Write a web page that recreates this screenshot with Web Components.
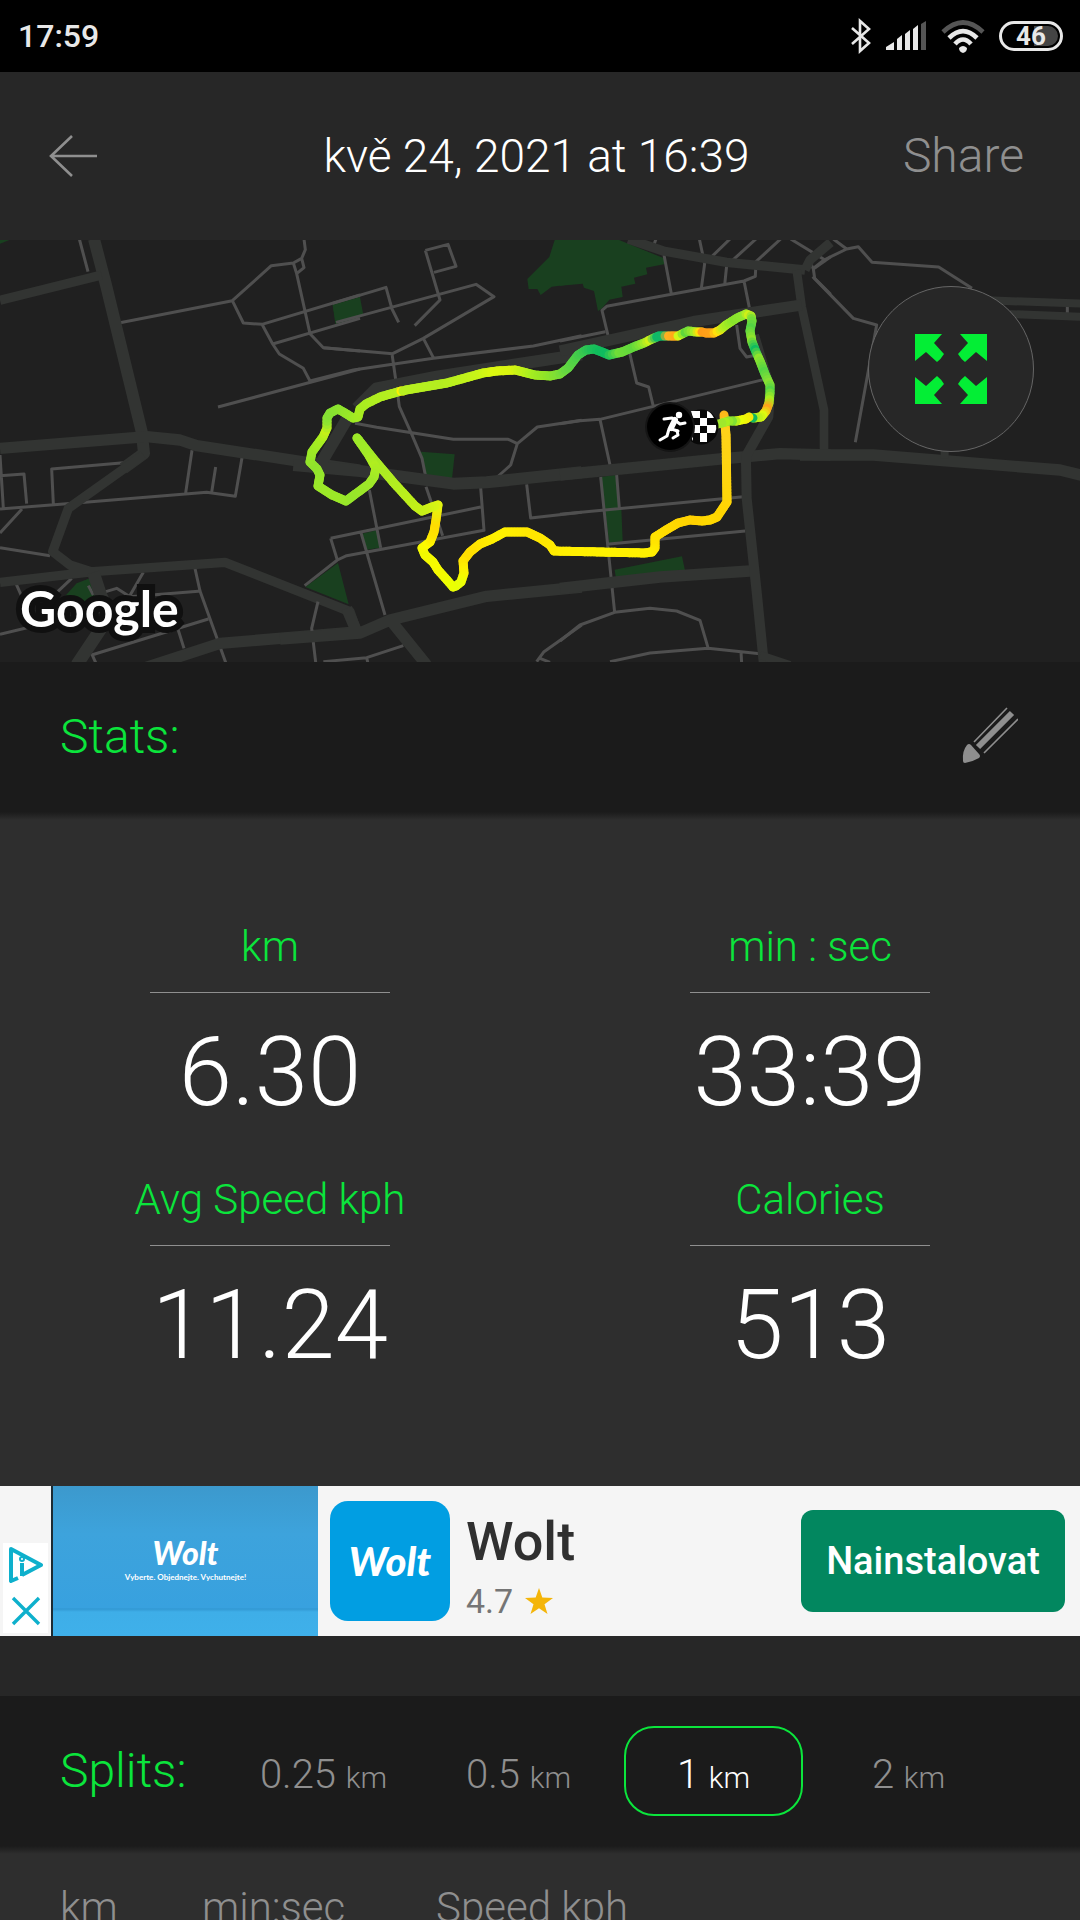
<!DOCTYPE html>
<html lang="cs">
<head>
<meta charset="utf-8">
<meta name="viewport" content="width=device-width, initial-scale=1">
<title>Run summary</title>
<style>
:root {
  --green: #0be53c;
  --muted: #8f8f8f;
  --dark: #1b1b1b;
  --panel: #2e2e2e;
  --bar: #272727;
}
body { margin: 0; background: var(--panel); color: #fff; font-family: Roboto, "Liberation Sans", sans-serif; font-weight: 300; }
</style>
</head>
<body>
<run-app></run-app>
<script>
const define = (name, html, setup) => {
  const template = document.createElement('template');
  template.innerHTML = '<style>:host{display:block;box-sizing:border-box}*{box-sizing:border-box}button{font:inherit;color:inherit;background:none;border:0;padding:0;margin:0}svg{display:block}</style>' + html;
  customElements.define(name, class extends HTMLElement {
    constructor() {
      super();
      this.attachShadow({ mode: 'open' }).append(template.content.cloneNode(true));
    }
    connectedCallback() { if (setup) setup(this, this.shadowRoot); }
  });
};

define('status-bar', `
<style>
:host { height: 72px; background: #000; color: #e8e8e8; font-weight: 500; display: flex; align-items: center; justify-content: space-between; padding: 0 17px 0 18px; }
time { font-size: 32px; line-height: 40px; }
.icons { display: flex; align-items: center; gap: 14px; }
.battery { width: 64px; height: 30px; border: 3px solid #e8e8e8; border-radius: 15px; padding: 2px; }
.battery span { display: block; height: 20px; border-radius: 10px; font-size: 26px; line-height: 20px; font-weight: 700; text-align: center; background: linear-gradient(90deg, #000 55%, #444 55%); }
</style>
<time>17:59</time>
<div class="icons">
  <svg width="22" height="36" viewBox="0 0 22 36" fill="none" stroke="#e8e8e8" stroke-width="2.6"><path d="M2 10 19 25 10 33V3L19 11 2 26"/></svg>
  <svg width="41" height="30" viewBox="0 0 41 30" fill="#e8e8e8"><path d="M0 29v-3l8-5v8zM11 29V18l5-4v15zM19 29V13l5-4v20zM27 29V8l5-4v25z"/><path fill="#555" d="M35 29V3l5-3v29z"/></svg>
  <svg width="44" height="34" viewBox="0 0 44 34" fill="none" stroke="#e8e8e8" stroke-width="4.6"><path stroke="#555" d="M2 13Q22-6 42 13"/><path d="M8 19Q22 5 36 19M14 25Q22 16 30 25"/><path fill="#e8e8e8" stroke="none" d="M18 29q4-4 8 0 0 4-4 5-4-1-4-5z"/></svg>
  <div class="battery"><span>46</span></div>
</div>`);

define('page-header', `
<style>
:host { height: 168px; background: var(--bar); display: grid; grid-template-columns: 1fr auto 1fr; align-items: center; padding: 0 56px 0 49px; }
h1 { margin: 0; font-size: 46px; line-height: 64px; font-weight: 300; }
button { justify-self: start; color: var(--muted); }
.share { justify-self: end; font-size: 48px; line-height: 64px; }
</style>
<button aria-label="Back"><svg width="48" height="42" viewBox="0 0 48 42" fill="none" stroke="#8f8f8f" stroke-width="2.6"><path d="M48 21H3M23 1 2 21 23 41"/></svg></button>
<h1><slot></slot></h1>
<button class="share">Share</button>`);

/* Recorded track: x, y and the pace colour at that point */
const track = [
[724,415,'ffb21a'],[726,435,'ffd21a'],[727,502,'ffd60a'],[717,517,'ffd400'],[710,520,'ffd600'],[702,521,'ffd900'],[690,520,'ffd000'],[678,523,'ffd400'],[666,530,'ffd900'],[655,537,'ffe000'],[655,548,'ffe400'],[652,552,'ffea00'],[644,553,'fff000'],[600,552,'fff200'],[554,551,'ffee00'],[550,545,'ffea00'],[540,538,'ffe800'],[527,532,'ffe600'],[505,532,'ffee00'],[492,539,'fff200'],[480,544,'ffea00'],[470,552,'ffe000'],[463,561,'ffde00'],[464,573,'fff000'],[461,582,'f4fb00'],[456,586,'e8ff08'],[453,587,'e8ff08'],[447,580,'ecff00'],[438,570,'f4fa00'],[433,562,'f8fa00'],[425,555,'f4fa00'],[422,548,'f0fa00'],[430,542,'fffa00'],[434,532,'ffe400'],[436,520,'ffdc00'],[438,505,'e8f010'],[432,507,'d8f514'],[422,511,'ccf018'],[415,506,'c4f018'],[393,482,'b4ee20'],[372,457,'a8ea24'],[357,438,'9ce828'],[368,454,'a0ea28'],[376,468,'b0ee20'],[374,477,'a8ec24'],[369,484,'a0e828'],[346,501,'96e62a'],[332,495,'9ce828'],[318,486,'9ce828'],[320,475,'98e82a'],[317,469,'94e62c'],[310,462,'90e42c'],[312,452,'98e828'],[323,437,'a8ee20'],[327,428,'c4f018'],[327,418,'90e430'],[330,413,'84e034'],[338,409,'88e230'],[345,413,'90e42c'],[353,418,'98e828'],[358,417,'a0ea24'],[360,409,'a8ec20'],[366,404,'a8ec20'],[380,397,'b0ee20'],[401,391,'b8ee20'],[403,391,'fff000'],[406,390,'b8f020'],[447,383,'b4ee20'],[483,373,'c8f418'],[497,371,'dcf810'],[515,370,'d8f410'],[535,375,'a8ee20'],[550,376,'90e428'],[560,374,'80e034'],[568,368,'68d840'],[578,355,'4cd048'],[586,350,'38c850'],[594,349,'20c058'],[602,352,'10bc5c'],[609,355,'10bc60'],[622,352,'70dc38'],[636,346,'60d83c'],[644,343,'88e430'],[652,339,'d0f018'],[659,336,'10b868'],[665,336,'10b868'],[672,336,'ffb020'],[678,336,'ffaa18'],[682,334,'d0f818'],[688,331,'60d83c'],[697,332,'a8ec28'],[702,332,'ffe008'],[706,333,'ff9c18'],[714,333,'ffa218'],[720,330,'ffe00c'],[726,325,'b0ee20'],[737,318,'88e42c'],[746,314,'90e830'],[751,316,'d0f018'],[752,321,'80e034'],[750,331,'54d444'],[752,342,'90e42c'],[756,352,'10bc60'],[760,361,'90e42c'],[765,374,'54d444'],[770,385,'88e034'],[770,393,'54d444'],[769,403,'a8ec20'],[766,411,'ffa21c'],[761,417,'e0f810'],[753,418,'b0ee20'],[749,417,'10b860'],[746,419,'f8e808'],[736,421,'e8ff08'],[729,421,'80e034'],[722,423,'a8f020'],[718,424,'a0e82c']
];

define('route-map', `
<style>
:host { position: relative; overflow: hidden; background: #202020; }
svg.map { width: 100%; height: auto; }
.minor { fill: none; stroke: #4f4f4f; stroke-width: 9; stroke-linejoin: round; }
.major { fill: none; stroke: #323432; stroke-width: 34; stroke-linejoin: round; }
.park { fill: #19401f; }
.track line { stroke-width: 9; stroke-linecap: round; }
.logo { position: absolute; left: 20px; bottom: 22px; font: 700 50px/64px Lato, sans-serif; color: #fff; -webkit-text-stroke: 12px #101010; paint-order: stroke fill; }
button { position: absolute; right: 46px; top: 46px; width: 166px; height: 166px; border-radius: 50%; background: var(--bar); border: 1px solid #666; display: grid; place-items: center; }
</style>
<svg class="map" viewBox="0 240 1080 422" role="img" aria-label="Route map">
  <g transform="translate(0 235) scale(.333333)">
    <path class="park" d="M0 15H28L0 26zM998 210 1080 186V250L1006 266zM1014 984 1046 1108 916 1056zM180 1100 230 1045 270 1030 290 1090 200 1120 130 1150z"/>
    <path class="minor" d="M238 12 264 110M360 263 697 197 814 92 880 84M697 197 730 264 786 268 1080 180M818 327 1080 250M786 268 818 327 838 357 910 400 930 438M912 12 916 44 905 70 880 84 890 116 930 296 970 338 1080 348M905 70 912 98 890 116M654 516 1080 402M0 660 10 820M0 722 72 717 80 806M388 682 155 702 160 806M0 822 200 806 620 772 706 784 726 668M576 646 557 774M647 696 635 772M66 822 0 894M0 938 150 962M215 1030 110 1130M430 1012 385 1090M310 1072 350 1060 390 1085 604 1068M584 996 600 1068 678 1285M48 1046 72 1100M0 1198 240 1140 300 1130M275 1260 625 1152M275 1256 288 1285M530 1170 552 1240M265 1052 280 1080"/>
    <path class="major" style="stroke-width:36" d="M282 12 318 150 425 590 432 655 370 700"/>
    <path class="major" d="M0 196 305 120M430 660 205 820 158 950 210 990 280 1012M0 1042 280 1010 675 982 1050 1130 1075 1200" style="stroke-width:28"/>
    <path class="major" d="M0 640 440 605 540 615 590 632 920 682 1080 705"/>
    <path class="major" d="M280 1012 302 1080 330 1140 230 1290" style="stroke-width:38"/>
    <path class="major" d="M430 1300 660 1225 1080 1190"/>
  </g>
  <g transform="translate(280 235) scale(.333333)">
    <path class="park" d="M825 12H905V144L815 155 782 180 772 162 746 162 742 132 808 66zM158 210 240 187 250 240 168 266zM422 650 524 658 516 732 438 724zM247 896 290 886 300 938 260 944z"/>
    <path class="minor" d="M158 205 318 157 336 222 356 262M168 262 588 148 642 185 430 310 338 356 130 338M436 46 504 28 528 94 462 112M436 46 480 195 404 272M430 310 460 368M90 438 220 405 460 370 760 333 905 302M336 356 348 440 358 515 394 595 426 670 436 720M225 565 290 577 520 613 685 613 712 626 692 690 652 726M712 626 772 576 905 556M268 765 302 938M152 910 602 816M152 910 172 975 200 962 612 886 602 758M438 755 488 902M242 890 315 1140M172 975 74 1052M114 1100 95 1180 108 1290M740 748 752 849 905 832M130 1280 260 1268 370 1232M260 1268 264 1285M770 1280 792 1250 905 1170M780 1270 810 1282"/>
    <path class="major" d="M205 545 140 655 120 690M230 520 290 460 470 425 905 358M40 690 240 708 520 746 620 742 905 712" style="stroke-width:36"/>
    <path class="major" d="M0 1212 240 1194 330 1155 620 1084 905 1056M335 1160 440 1290M200 1120 230 1190"/>
  </g>
  <g transform="translate(560 235) scale(.333333)">
    <path class="park" d="M0 12H170L312 70V88L258 98 262 118 222 128 226 146 184 155 188 186 148 194 126 220 114 228 102 168 72 158 68 146 0 152zM122 726 166 720 178 820 184 822 188 918 148 924zM164 1004 366 964 376 1012 168 1030z"/>
    <path class="minor" d="M278 40 288 12M312 60 334 176M418 12 434 86 424 160M510 12 450 70M588 12 500 92 494 150M662 12 588 80 586 124 552 138 334 178 140 214 126 226 148 318M552 138 568 218M0 318 136 290M530 270 540 340 560 366 590 360M208 350 230 444 266 456 280 514M0 566 60 557 120 553 280 514 610 434M120 553 150 690M122 726 164 1132M170 720 178 820M0 838 550 785M140 928 556 888M0 1218 60 1170 164 1132 270 1120 350 1128 420 1156 444 1238M150 1280 270 1254 444 1240 600 1256M543 1250 545 1285M692 12 800 78M812 65 760 102 764 130 812 178M760 102 750 80"/>
    <path class="major" d="M205 12 310 48 500 82 735 105M812 22 750 75 735 105" style="stroke-width:28"/>
    <path class="major" d="M710 105 725 215 792 525 792 655" style="stroke-width:26"/>
    <path class="major" d="M0 348 400 260 725 210M0 720 480 672 660 656 812 660M0 1060 300 1026 570 1008"/>
    <path class="major" d="M630 470 625 545 560 660 558 680 560 790 590 1070 612 1290" style="stroke-width:30"/>
    <path class="major" d="M600 1260 690 1290M585 300 630 450" style="stroke-width:24"/>
  </g>
  <g transform="translate(800 235) scale(.333333)">
    <path class="minor" d="M100 12 140 42 72 75 38 102M140 42 175 35 216 82 416 96 516 160M38 125 160 250 230 270 166 622M802 212V236"/>
    <path class="major" d="M560 196 850 206M600 236 850 246" style="stroke-width:24"/>
    <path class="major" d="M0 660 220 660 780 705 850 722"/>
    <path class="major" style="stroke-width:24" d="M434 640V670"/>
  </g>
  <g class="track"></g>
  <circle cx="701" cy="427" r="17.5" fill="#080808"/>
  <path fill="#fff" d="M691 411h9v7h7v-7q4 1 7 7h-7v8h-7v-8h-7zM707 425h9q1 4-1 8h-8zM700 425v8h-8v-8zM700 433h7v9h-7zM692 435q2 3 0 6z"/>
  <circle cx="670" cy="427" r="25" fill="#151515"/><circle cx="670" cy="427" r="23" fill="#000"/>
  <g fill="none" stroke="#fff" stroke-linecap="round" stroke-linejoin="round"><path stroke-width="3" d="M664 419 672 418 680 424 685 423M677 431 678 435 673 438"/><path stroke-width="6" d="M675 420 671 428"/><path stroke-width="3" d="M671 429 678 431M669 429 667 436 660 440"/></g>
  <circle cx="679" cy="415" r="3.2" fill="#fff"/>
</svg>
<span class="logo">Google</span>
<button aria-label="Expand map"><svg width="72" height="70" viewBox="0 0 72 70" fill="#03ee35"><path d="M0 0H27L19 9 29 20Q26 25 22 28L11 18 0 27zM72 0H45L53 9 43 20Q46 25 50 28L61 18 72 27zM0 70H27L19 61 29 50Q26 45 22 42L11 52 0 43zM72 70H45L53 61 43 50Q46 45 50 42L61 52 72 43z"/></svg></button>`,
(host, root) => {
  const g = root.querySelector('.track');
  const rgb = h => [0, 2, 4].map(i => parseInt(h.slice(i, i + 2), 16));
  for (let i = 1; i < track.length; i++) {
    const [x0, y0, c0] = track[i - 1], [x1, y1, c1] = track[i];
    const a = rgb(c0), b = rgb(c1);
    const n = Math.max(1, Math.round(Math.hypot(x1 - x0, y1 - y0) / 3));
    for (let k = 0; k < n; k++) {
      const t = k / n, u = (k + 1) / n;
      const line = document.createElementNS('http://www.w3.org/2000/svg', 'line');
      line.setAttribute('x1', x0 + (x1 - x0) * t);
      line.setAttribute('y1', y0 + (y1 - y0) * t);
      line.setAttribute('x2', x0 + (x1 - x0) * u);
      line.setAttribute('y2', y0 + (y1 - y0) * u);
      line.setAttribute('stroke', 'rgb(' + a.map((v, j) => Math.round(v + (b[j] - v) * u)) + ')');
      g.append(line);
    }
  }
});

define('section-bar', `
<style>
:host { background: var(--dark); height: 150px; display: flex; align-items: center; padding: 0 62px 0 60px; position: relative; }
:host::after { content: ""; position: absolute; left: 0; right: 0; top: 100%; height: 8px; background: linear-gradient(var(--dark), var(--panel)); }
h2 { margin: 0; width: 166px; font-size: 48px; line-height: 64px; font-weight: 300; color: var(--green); }
.content { flex: 1; display: flex; justify-content: flex-end; }
</style>
<h2><slot name="title"></slot></h2>
<div class="content"><slot></slot></div>`);

define('edit-button', `
<button aria-label="Edit"><svg width="56" height="56" viewBox="0 0 56 56" fill="none" stroke="#8f8f8f"><path stroke-width="1.6" d="M12 35 45 1M22 46 56 12"/><path stroke-width="6" d="M16 40 50 6"/><path fill="#8f8f8f" stroke="none" d="M1 54Q0 44 5 38 7 36 9 38L17 47Q19 49 17 51 10 55 3 56 1 56 1 54z"/></svg></button>`);

define('stat-item', `
<style>
:host { text-align: center; }
.label { font-size: 42px; line-height: 60px; color: var(--green); }
hr { width: 240px; height: 1px; border: 0; background: #8f8f8f; margin: 15px auto 29px; }
.value { font-size: 96px; line-height: 100px; }
</style>
<div class="label"><slot name="label"></slot></div>
<hr>
<div class="value"><slot></slot></div>`);

define('stat-grid', `
<style>:host { display: grid; grid-template-columns: 1fr 1fr; row-gap: 48px; padding: 105px 0 111px; background: var(--panel); }</style>
<slot></slot>`);

define('app-ad', `
<style>
:host { height: 150px; display: flex; align-items: center; background: #f5f5f5; color: #303030; font-weight: 500; padding-right: 15px; }
.choices { align-self: stretch; width: 53px; border-right: 2px solid #1d2b33; padding: 57px 3px 3px; }
.choices div { background: #fff; height: 90px; display: flex; flex-direction: column; align-items: center; gap: 13px; padding-top: 4px; }
.promo { align-self: stretch; width: 265px; margin-right: 12px; color: #fff; background: linear-gradient(#3c99cd, #3da3dc 32%, #38a1df 81%, #3299d4 82%, #3eaee8 84%, #3fb0ea); text-align: center; padding-top: 50px; font-family: Lato, sans-serif; font-weight: 700; }
.promo b { display: block; font-size: 32px; line-height: 34px; font-style: italic; font-weight: 900; }
.promo small { display: block; font-size: 8px; line-height: 14px; }
.tile { width: 120px; height: 120px; border-radius: 18px; background: #019ee2; color: #fff; font: italic 900 40px/120px Lato, sans-serif; text-align: center; margin-right: 16px; }
.name { font-size: 54px; line-height: 62px; }
.info { flex: 1; padding-top: 10px; }
.rating { display: flex; align-items: center; gap: 12px; font-size: 34px; line-height: 40px; padding-top: 8px; color: #757575; font-weight: 400; }
.install { width: 264px; height: 102px; border-radius: 12px; background: #02875f; color: #fff; font-size: 38px; }
</style>
<div class="choices"><div>
<button aria-label="Ad choices"><svg width="36" height="36" viewBox="0 0 36 36" fill="none" stroke="#0eb0cc" stroke-width="4" stroke-linejoin="round"><path d="M10 31 3 34V2L33 18 14 28"/><path d="M14 16V29"/><circle cx="14" cy="12" r="1" /></svg></button>
<button aria-label="Close ad"><svg width="30" height="30" viewBox="0 0 30 30" stroke="#0eb0cc" stroke-width="3.4"><path d="M2 2 28 28M28 2 2 28"/></svg></button>
</div></div>
<div class="promo"><b>Wolt</b><small>Vyberte. Objednejte. Vychutnejte!</small></div>
<div class="tile">Wolt</div>
<div class="info"><div class="name">Wolt</div><div class="rating">4.7 <svg width="28" height="27" viewBox="0 0 28 27" fill="#f4b509"><path d="M14 0 17.300 9.500 28 10 19.500 16.300 22.500 26 14 20.300 5.500 26 8.500 16.300 0 10 10.700 9.500z"/></svg></div></div>
<button class="install">Nainstalovat</button>`);

define('split-tabs', `
<style>
:host { display: flex; flex: 1; margin-right: 12px; }
button { flex: 1 1 0; min-width: 0; margin: 0 8px; height: 90px; border: 2px solid transparent; border-radius: 30px; padding-top: 10px; font-size: 40px; line-height: 52px; color: var(--muted); white-space: nowrap; }
button[aria-pressed=true] { border-color: var(--green); color: #fff; }
small { font-size: 30px; }
</style>
<button aria-pressed="false">0.25 <small>km</small></button>
<button aria-pressed="false">0.5 <small>km</small></button>
<button aria-pressed="true">1 <small>km</small></button>
<button aria-pressed="false">2 <small>km</small></button>`,
(host, root) => {
  const buttons = root.querySelectorAll('button');
  buttons.forEach(b => b.onclick = () => buttons.forEach(o => o.setAttribute('aria-pressed', o === b)));
});

define('split-table', `
<style>
:host { padding: 34px 62px 0 60px; }
table { border-collapse: collapse; }
th { padding: 0; text-align: left; font-size: 42px; line-height: 56px; font-weight: 300; color: var(--muted); white-space: nowrap; }
th:nth-child(1) { min-width: 142px; }
th:nth-child(2) { min-width: 234px; }
</style>
<table><thead><tr><th scope="col">km</th><th scope="col">min:sec</th><th scope="col">Speed kph</th></tr></thead></table>`);

define('run-app', `
<style>
:host { height: 100vh; overflow: hidden; }
.gap { height: 60px; background: var(--bar); }
</style>
<status-bar></status-bar>
<page-header>kvě 24, 2021 at 16:39</page-header>
<route-map></route-map>
<section-bar><span slot="title">Stats:</span><edit-button></edit-button></section-bar>
<stat-grid>
  <stat-item><span slot="label">km</span>6.30</stat-item>
  <stat-item><span slot="label">min : sec</span>33:39</stat-item>
  <stat-item><span slot="label">Avg Speed kph</span>11.24</stat-item>
  <stat-item><span slot="label">Calories</span>513</stat-item>
</stat-grid>
<app-ad></app-ad>
<div class="gap"></div>
<section-bar><span slot="title">Splits:</span><split-tabs></split-tabs></section-bar>
<split-table></split-table>`);
</script>
</body>
</html>
